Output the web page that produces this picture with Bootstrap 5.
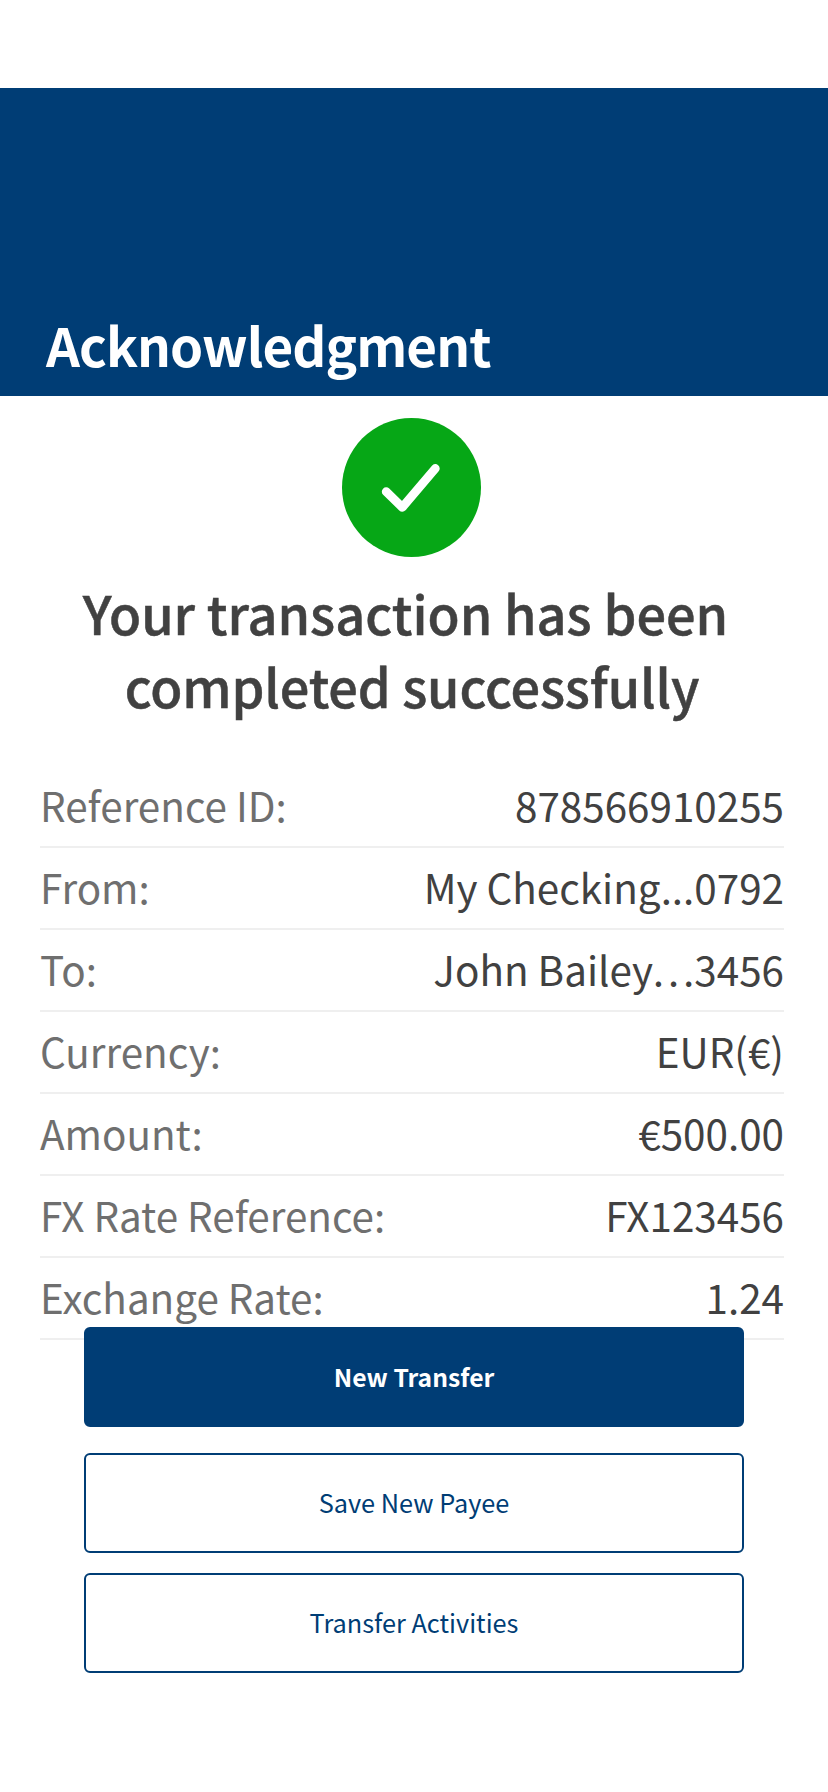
<!DOCTYPE html>
<html lang="en">
<head>
<meta charset="utf-8">
<meta name="viewport" content="width=device-width, initial-scale=1">
<title>Acknowledgment</title>
<link rel="stylesheet" href="https://cdn.jsdelivr.net/npm/bootstrap@5.3.0/dist/css/bootstrap.min.css">
<style>
body{font-family:"Noto Sans CJK SC",sans-serif;background:#fff;color:#414141;overflow-x:hidden}
.hero{margin-top:88px;height:308px;background:#003d75;padding:0 0 12px 46px}
.hero h1{font-size:53px;line-height:80px;font-weight:700;letter-spacing:-.95px;margin:0}
.tick{display:block;width:139px;height:139px;margin:22px 0 0 342px}
.done{font-size:52.3px;line-height:73px;font-weight:500;-webkit-text-stroke:.5px #414141;margin:19px 0 0}
.done span{display:block;padding-right:4px;letter-spacing:-.15px}
.done span:first-child{padding-right:17px;letter-spacing:0}
.details{margin:44px 44px 0 40px}
.line{height:82px;border-bottom:2px solid #efefef;font-size:40.4px;line-height:77px}
.line dt{font-weight:400;color:#6f6f6f}
.line dd{margin:0}
.actions{position:relative;margin:-13px 84px 0}
.act{height:100px;border-radius:6px;border:2px solid #003d75;font-size:25.3px;color:#003d75;display:flex;align-items:center;justify-content:center;background:#fff}
.act-main{background:#003d75;color:#fff;font-size:24.7px;font-weight:700;margin-bottom:26px}
.act-save{margin-bottom:20px}
</style>
</head>
<body>
<header class="hero d-flex align-items-end text-white"><h1>Acknowledgment</h1></header>
<main>
<svg class="tick" viewBox="0 0 139 139"><circle cx="69.500" cy="69.500" r="69.500" fill="#06a716"/><path d="M44.200 73.700L60.300 89.300L93.300 50.500" fill="none" stroke="#fff" stroke-width="8.800" stroke-linecap="round" stroke-linejoin="round"/></svg>
<h2 class="done text-center"><span>Your transaction has been</span><span>completed successfully</span></h2>
<dl class="details">
<div class="line d-flex justify-content-between"><dt>Reference ID:</dt><dd>878566910255</dd></div>
<div class="line d-flex justify-content-between"><dt>From:</dt><dd>My Checking...0792</dd></div>
<div class="line d-flex justify-content-between"><dt>To:</dt><dd>John Bailey…3456</dd></div>
<div class="line d-flex justify-content-between"><dt>Currency:</dt><dd>EUR(€)</dd></div>
<div class="line d-flex justify-content-between"><dt>Amount:</dt><dd>€500.00</dd></div>
<div class="line d-flex justify-content-between"><dt>FX Rate Reference:</dt><dd>FX123456</dd></div>
<div class="line d-flex justify-content-between"><dt>Exchange Rate:</dt><dd>1.24</dd></div>
</dl>
<div class="actions">
<button class="act act-main w-100">New Transfer</button>
<button class="act act-save w-100">Save New Payee</button>
<button class="act w-100">Transfer Activities</button>
</div>
</main>
<script src="https://cdn.jsdelivr.net/npm/bootstrap@5.3.0/dist/js/bootstrap.bundle.min.js"></script>
</body>
</html>
